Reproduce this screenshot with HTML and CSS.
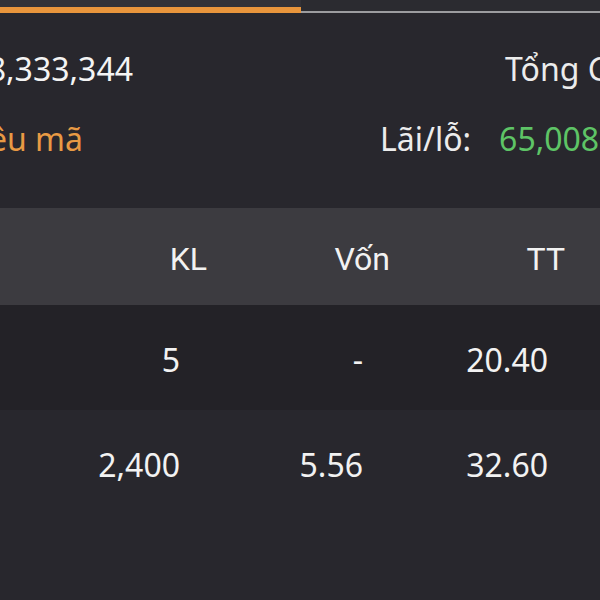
FILE: index.html
```html
<!DOCTYPE html>
<html lang="vi">
<head>
<meta charset="utf-8">
<link rel="stylesheet" href="styles.css">
</head>
<body>
<div class="tabs">
  <div class="tab tab-active"></div>
  <div class="tab tab-idle"></div>
</div>
<section class="summary">
  <div class="sum-row sum-row-1">
    <div class="clip-left"><span class="val-white">18,333,344</span></div>
    <div></div>
    <div class="label">Tổng Giá trị</div>
  </div>
  <div class="sum-row sum-row-2">
    <div class="clip-left"><span class="link-orange">Nhiều mã</span></div>
    <div></div>
    <div class="label">Lãi/lỗ:</div>
    <div class="val-green">65,008,000</div>
  </div>
</section>
<section class="table">
  <div class="trow thead">
    <div class="cell"></div>
    <div class="cell">KL</div>
    <div class="cell">Vốn</div>
    <div class="cell">TT</div>
    <div class="cell"></div>
  </div>
  <div class="trow tbody dark">
    <div class="cell"></div>
    <div class="cell">5</div>
    <div class="cell">-</div>
    <div class="cell">20.40</div>
    <div class="cell"></div>
  </div>
  <div class="trow tbody">
    <div class="cell"></div>
    <div class="cell">2,400</div>
    <div class="cell">5.56</div>
    <div class="cell">32.60</div>
    <div class="cell"></div>
  </div>
</section>
</body>
</html>
```

FILE: styles.css
```css
html, body {
  margin: 0;
  padding: 0;
}
body {
  width: 600px;
  height: 600px;
  overflow: hidden;
  background: #28272d;
  color: #f2f2f2;
  font-family: "Noto Sans", "Open Sans", sans-serif;
}
.tabs {
  display: flex;
  height: 14px;
  background: #28272d;
}
.tab {
  height: 14px;
  box-sizing: border-box;
}
.tab-active {
  width: 301px;
  background: linear-gradient(#323238 0, #323238 7px, #e8953c 7px, #e8953c 13px, #28272d 13px);
}
.tab-idle {
  flex: 1;
  background: linear-gradient(#2b2b30 0, #2b2b30 11px, #9c9c9f 11px, #9c9c9f 13px, #28272d 13px);
}
.summary {
  padding-top: 35px;
  height: 159px;
  box-sizing: content-box;
}
.sum-row {
  display: grid;
  align-items: center;
  white-space: nowrap;
  font-size: 32px;
  line-height: 40px;
}
.sum-row-1 {
  grid-template-columns: 133px 372px auto;
}
.sum-row-2 {
  margin-top: 30px;
  grid-template-columns: 83px 297px auto auto;
  column-gap: 0;
}
.sum-row-2 .label {
  margin-right: 28px;
}
.clip-left {
  display: flex;
  justify-content: flex-end;
}
.val-white { color: #f4f4f4; }
.link-orange { color: #e89a44; }
.label { color: #ececec; }
.val-green { color: #5ec466; }
.table {
  font-size: 32px;
}
.trow {
  display: grid;
  grid-template-columns: 24px 183px 183px 175px 35px;
  align-items: center;
  text-align: right;
  white-space: nowrap;
}
.thead {
  height: 97px;
  background: #3c3b40;
  font-family: Roboto, "Noto Sans", sans-serif;
  font-size: 32px;
  padding-top: 4px;
  box-sizing: border-box;
}
.tbody {
  height: 105px;
  padding-top: 4px;
  box-sizing: border-box;
}
.tbody.dark {
  background: #232227;
}
.tbody .cell:nth-child(2),
.tbody .cell:nth-child(3) {
  padding-right: 27px;
}
.tbody .cell:nth-child(4) {
  padding-right: 17px;
}
```
